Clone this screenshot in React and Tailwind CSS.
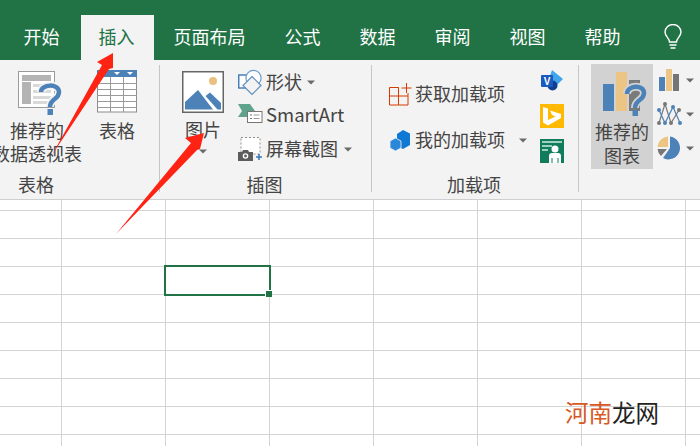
const tabs = ["开始", "插入", "页面布局", "公式", "数据", "审阅", "视图", "帮助"];
const rows = Array.from({ length: 10 });
const cols = Array.from({ length: 7 });

function Caret({ className = "" }) {
  return (
    <svg width="8" height="5" viewBox="0 0 8 5" className={"shrink-0 " + className}>
      <polygon points="0,0.5 8,0.5 4,4.5" fill="#6a6a6a" />
    </svg>
  );
}

function PivotIcon() {
  return (
    <svg width="46" height="47" viewBox="0 0 46 47">
      <rect x="0.5" y="1.5" width="36" height="36" fill="#fff" stroke="#9a9a9a" />
      <rect x="4" y="5" width="29" height="6" fill="#b4b4b4" />
      <rect x="4" y="12" width="9" height="22" fill="#b4b4b4" />
      <rect x="15" y="14" width="18" height="3" fill="#d9d9d9" />
      <rect x="15" y="20" width="18" height="3" fill="#d9d9d9" />
      <rect x="15" y="26" width="18" height="3" fill="#d9d9d9" />
      <rect x="15" y="31" width="18" height="3" fill="#d9d9d9" />
      <path d="M23 22 C23 14 41 13 41 22 C41 30 32 28 32 37" fill="none" stroke="#f3f3f3" strokeWidth="8" />
      <path d="M23 22 C23 14 41 13 41 22 C41 30 32 28 32 37" fill="none" stroke="#4d82b8" strokeWidth="4.5" />
      <rect x="29.5" y="39" width="5.5" height="6" fill="#4d82b8" />
    </svg>
  );
}

function TableIcon() {
  return (
    <svg width="40" height="43" viewBox="0 0 40 43">
      <rect x="0.5" y="1" width="39" height="41" fill="#fff" stroke="#8c8c8c" />
      <rect x="0" y="0" width="40" height="7" fill="#4d82b8" />
      <polygon points="17,2 23,2 20,5" fill="#fff" />
      <polygon points="30,2 36,2 33,5" fill="#fff" />
      {[13, 19, 25, 31, 37].map((y) => (
        <line key={y} x1="0" x2="40" y1={y + 0.5} y2={y + 0.5} stroke="#9a9a9a" />
      ))}
      <line x1="13.5" x2="13.5" y1="7" y2="42" stroke="#9a9a9a" />
      <line x1="26.5" x2="26.5" y1="7" y2="42" stroke="#9a9a9a" />
    </svg>
  );
}

function PictureIcon() {
  return (
    <svg width="42" height="42" viewBox="0 0 42 42">
      <rect x="0.75" y="0.75" width="40.5" height="40.5" fill="#fff" stroke="#666" strokeWidth="1.5" />
      <circle cx="31" cy="10" r="4" fill="#e9c07f" />
      <path d="M3 31 L16 19 L31 38.5 L3 38.5 Z" fill="#4d82b8" />
      <path d="M23.5 25 L28 21.5 L39 32 L39 38.5 L35.5 38.5 Z" fill="#4d82b8" />
    </svg>
  );
}

function ShapeIcon() {
  return (
    <svg width="26" height="28" viewBox="0 0 26 28">
      <rect x="0.75" y="7" width="13.5" height="13" fill="#fff" stroke="#3f78b4" strokeWidth="1.4" />
      <circle cx="15.5" cy="10" r="7.6" fill="#fff" stroke="#6c9bcb" strokeWidth="1.2" />
      <polygon points="14,8.5 23,17.5 14,26.5 5,17.5" fill="#f3f3f3" stroke="#5f8fbf" strokeWidth="1.2" />
    </svg>
  );
}

function SmartArtIcon() {
  return (
    <svg width="25" height="20" viewBox="0 0 25 20">
      <polygon points="0,0 12,0 17,7 12,13 0,13 4,7" fill="#5fa38d" />
      <rect x="9.5" y="7.5" width="14.5" height="11" fill="#fff" stroke="#777" />
      <rect x="12" y="10.5" width="2" height="1" fill="#777" />
      <rect x="12" y="14" width="2" height="1" fill="#777" />
      <rect x="15.5" y="10.5" width="6" height="1" fill="#999" />
      <rect x="15.5" y="14" width="6" height="1" fill="#999" />
    </svg>
  );
}

function ScreenshotIcon() {
  return (
    <svg width="25" height="24" viewBox="0 0 25 24">
      <rect x="3" y="0.5" width="19" height="16.5" fill="#fff" stroke="#8f8f8f" strokeDasharray="2 2" />
      <path d="M0 15 H4 L5 13 H10 L11 15 H15 V24 H0 Z" fill="#5c5c5c" />
      <circle cx="7.5" cy="19" r="2.8" fill="#fff" />
      <circle cx="7.5" cy="19" r="1.4" fill="#5c5c5c" />
      <path d="M18 20 H24 M21 17 V23" stroke="#3f78b4" strokeWidth="1.6" />
    </svg>
  );
}

function GetAddinIcon() {
  return (
    <svg width="23" height="23" viewBox="0 0 23 23" fill="none" stroke="#d83b01" strokeWidth="1">
      <path d="M0.5 4.5 H9.5 V22 H0.5 Z M0.5 13 H19 V22 H9.5 M9.5 13 V4.5 M19 13 V10" />
      <path d="M17.5 0 V10 M12.5 5 H22.5" />
    </svg>
  );
}

function MyAddinIcon() {
  return (
    <svg width="21" height="21" viewBox="0 0 21 21">
      <polygon points="13,0 20,3.5 20,15 13,19 7,16 7,4" fill="#0f78d4" />
      <polygon points="5.5,8 11,11 11,18 5.5,21 0,18 0,11" fill="#2b88d8" stroke="#f3f3f3" strokeWidth="0.8" />
    </svg>
  );
}

function VisioIcon() {
  return (
    <svg width="22" height="21" viewBox="0 0 22 21">
      <polygon points="11,0 22,9 15,16 7,12" fill="#41a5ee" />
      <circle cx="11.5" cy="15.5" r="5" fill="#103f91" />
      <rect x="0" y="5" width="12" height="12" rx="1" fill="#185abd" />
      <text x="6" y="15" textAnchor="middle" fontSize="10" fontWeight="700" fill="#fff" fontFamily="Liberation Sans">V</text>
    </svg>
  );
}

function BingIcon() {
  return (
    <svg width="24" height="24" viewBox="0 0 24 24">
      <rect width="24" height="24" fill="#ffb900" />
      <path d="M3 3 L8 4.5 V16 L15.5 12.5 L12 11 L10 6.5 L21 10 V14 L8 21.5 L3 18.5 Z" fill="#fff" />
    </svg>
  );
}

function PeopleIcon() {
  return (
    <svg width="24" height="24" viewBox="0 0 24 24">
      <rect width="24" height="24" fill="#107c5b" />
      <rect x="2" y="2" width="20" height="2" fill="#9fcfbd" />
      <rect x="2" y="6" width="10" height="2" fill="#9fcfbd" />
      <rect x="2" y="10" width="6" height="2" fill="#9fcfbd" />
      <circle cx="15" cy="10" r="3.5" fill="#fff" />
      <path d="M9 24 V17 Q9 14 12 14 H18 Q21 14 21 17 V24 H18.5 V19 H17.5 V24 H12.5 V19 H11.5 V24 Z" fill="#fff" />
    </svg>
  );
}

function ChartIcon() {
  return (
    <svg width="44" height="46" viewBox="0 0 44 46">
      <rect x="0" y="13" width="11" height="27" fill="#4d82b8" />
      <rect x="13" y="1" width="11" height="39" fill="#ecc584" />
      <rect x="26" y="9" width="11" height="31" fill="#7a7a7a" />
      <path d="M24 23 C24 14 41 13 41 22 C41 30 32 28 32 37" fill="none" stroke="#d2d2d2" strokeWidth="8" />
      <path d="M24 23 C24 14 41 13 41 22 C41 30 32 28 32 37" fill="none" stroke="#4d82b8" strokeWidth="4.5" />
      <rect x="29.5" y="39" width="5.5" height="6" fill="#4d82b8" />
    </svg>
  );
}

function BarIcon() {
  return (
    <svg width="22" height="22" viewBox="0 0 22 22">
      <rect x="1" y="8" width="6" height="14" fill="#4d82b8" />
      <rect x="8" y="0" width="6" height="22" fill="#ecc584" />
      <rect x="15" y="5" width="6" height="17" fill="#757575" />
    </svg>
  );
}

function LineIcon() {
  return (
    <svg width="25" height="24" viewBox="0 0 25 24" fill="none">
      <path d="M2 21 L8 2 L14 21 L22 8" stroke="#777" strokeWidth="1.2" />
      <path d="M2 8 L8 21 L16 5 L23 21" stroke="#4d82b8" strokeWidth="1.2" />
      {[[2, 21], [8, 2], [14, 21], [22, 8]].map(([x, y]) => (
        <circle key={x} cx={x} cy={y} r="2" fill="#777" />
      ))}
      {[[2, 8], [8, 21], [16, 5], [23, 21]].map(([x, y]) => (
        <circle key={x} cx={x} cy={y} r="2" fill="#4d82b8" />
      ))}
    </svg>
  );
}

function PieIcon() {
  return (
    <svg width="24" height="24" viewBox="0 0 24 24">
      <path d="M13 0.5 A11.5 11.5 0 1 1 6 22 L13 12 Z" fill="#4d82b8" />
      <path d="M11 0.5 V11 H0.5 A11 11 0 0 1 11 0.5 Z" fill="#ecc584" />
      <path d="M0.5 13 H10 L4 20 A11 11 0 0 1 0.5 13 Z" fill="#777" />
    </svg>
  );
}

function BulbIcon() {
  return (
    <svg width="18" height="26" viewBox="0 0 18 26" fill="none" stroke="#fff" strokeWidth="1.4">
      <path d="M5.5 18 C5.5 14 1 12.5 1 8 A8 7.5 0 0 1 17 8 C17 12.5 12.5 14 12.5 18 Z" />
      <path d="M5.5 21 H12.5 M6.5 24 H11.5" strokeWidth="1.6" />
    </svg>
  );
}

function Separator() {
  return <div className="w-px h-[127px] mt-[5px] bg-[#c6c6c6] shrink-0" />;
}

function GroupLabel({ children, className = "" }) {
  return <div className={"h-[24px] leading-[24px] mb-[3px] " + className}>{children}</div>;
}

export default function App() {
  return (
    <div className="relative w-[700px] h-[446px] overflow-hidden bg-white text-[18px] text-[#444] font-['Noto_Sans_CJK_SC','Noto_Sans',sans-serif]">
      <header className="h-[60px] bg-[#217346] flex items-end pl-[4px] text-white">
        {tabs.map((t) => (
          <div
            key={t}
            className={
              "h-[45px] leading-[42px] whitespace-nowrap " +
              (t === "插入"
                ? "ml-[2px] pl-[17.5px] pr-[19.5px] bg-[#f3f3f3] text-[#217346]"
                : "mx-px px-[18.5px]")
            }
          >
            {t}
          </div>
        ))}
        <div className="ml-[24px] mb-[10px]">
          <BulbIcon />
        </div>
      </header>

      <section className="h-[140px] bg-[#f3f3f3] border-b border-[#cfcfcf] flex leading-[23px]">
        <div className="w-[159px] shrink-0 flex flex-col">
          <div className="flex-1 flex pt-[10px]">
            <div className="w-[74px] flex flex-col items-center">
              <div className="h-[49px] w-[46px] ml-[7px]">
                <PivotIcon />
              </div>
              <div className="whitespace-nowrap text-center">
                推荐的
                <br />
                数据透视表
              </div>
            </div>
            <div className="w-[40px] ml-[23px] flex flex-col items-center">
              <div className="h-[49px]">
                <TableIcon />
              </div>
              <div className="whitespace-nowrap">表格</div>
            </div>
          </div>
          <GroupLabel className="pl-[18px]">表格</GroupLabel>
        </div>
        <Separator />

        <div className="w-[211px] shrink-0 flex flex-col">
          <div className="flex-1 flex pt-[8px]">
            <div className="w-[42px] ml-[22px] pt-[3px] flex flex-col items-center">
              <PictureIcon />
              <div className="whitespace-nowrap mt-[5px]">图片</div>
              <Caret className="mt-[8px]" />
            </div>
            <div className="ml-[14px] flex flex-col">
              <div className="flex items-center h-[28px]">
                <ShapeIcon />
                <span className="ml-[2px] mb-[2px] whitespace-nowrap">形状</span>
                <Caret className="ml-[5px]" />
              </div>
              <div className="flex items-center h-[24px] mt-[6px]">
                <SmartArtIcon />
                <span className="ml-[3px] text-[18.5px] whitespace-nowrap">SmartArt</span>
              </div>
              <div className="flex items-center h-[24px] mt-[11px]">
                <ScreenshotIcon />
                <span className="ml-[3px] mb-[2px] whitespace-nowrap">屏幕截图</span>
                <Caret className="ml-[6px]" />
              </div>
            </div>
          </div>
          <GroupLabel className="text-center pr-[2px]">插图</GroupLabel>
        </div>
        <Separator />

        <div className="w-[206px] shrink-0 flex flex-col">
          <div className="flex-1 flex pt-[10px]">
            <div className="ml-[17px] w-[150px] flex flex-col pt-[12px]">
              <div className="flex items-center h-[24px]">
                <GetAddinIcon />
                <span className="ml-[3px] mb-[2px] whitespace-nowrap">获取加载项</span>
              </div>
              <div className="flex items-center h-[24px] mt-[22px]">
                <div className="ml-px">
                  <MyAddinIcon />
                </div>
                <span className="ml-[4px] mb-[2px] whitespace-nowrap">我的加载项</span>
                <Caret className="ml-[14px]" />
              </div>
            </div>
            <div className="flex flex-col items-center ml-px">
              <VisioIcon />
              <div className="mt-[13px]">
                <BingIcon />
              </div>
              <div className="mt-[11px]">
                <PeopleIcon />
              </div>
            </div>
          </div>
          <GroupLabel className="text-center pr-[2px]">加载项</GroupLabel>
        </div>
        <Separator />

        <div className="flex-1 flex">
          <div className="ml-[12px] mt-[4px] w-[62px] h-[105px] bg-[#d2d2d2] flex flex-col items-center pt-[7px] leading-[24px]">
            <div className="h-[48px] w-[44px] ml-[12px] self-start">
              <ChartIcon />
            </div>
            <div className="text-center whitespace-nowrap">
              推荐的
              <br />
              图表
            </div>
          </div>
          <div className="ml-[4px] pt-[9px] flex flex-col">
            <div className="flex items-center h-[22px]">
              <div className="w-[29px] pl-[1px]">
                <BarIcon />
              </div>
              <Caret />
            </div>
            <div className="flex items-center h-[24px] mt-[11px]">
              <div className="w-[29px]">
                <LineIcon />
              </div>
              <Caret />
            </div>
            <div className="flex items-center h-[24px] mt-[10px]">
              <div className="w-[29px]">
                <PieIcon />
              </div>
              <Caret />
            </div>
          </div>
        </div>
      </section>

      <main className="h-[246px] overflow-hidden">
        <div className="grid grid-cols-[62px_repeat(6,104px)_15px] grid-rows-[11px_repeat(9,28px)]">
          {rows.map((_, r) =>
            [...cols, null].map((_, c) => (
              <div
                key={r + "-" + c}
                className={
                  "border-b border-[#d4d4d4] " + (c < 7 ? "border-r" : "")
                }
              />
            ))
          )}
        </div>
      </main>

      <div className="absolute left-[164px] top-[265px] w-[107px] h-[31px] border-2 border-[#217346]">
        <div className="absolute right-[-3px] bottom-[-3px] w-[6px] h-[6px] bg-[#217346] border-t border-l border-white box-content" />
      </div>

      <svg className="absolute inset-0 pointer-events-none" width="700" height="446" viewBox="0 0 700 446">
        <polygon points="113,53 97,62 102,65 52,155 109,69 113,68" fill="#ff2314" />
        <polygon points="204,133 185,138 191,143 116,234 197,150 200,149" fill="#ff2314" />
      </svg>

      <div className="absolute left-[565px] top-[394px] text-[23.5px] leading-[36px] whitespace-nowrap text-[#222]">
        <span className="text-[#d9581f]">河南</span>龙网
      </div>
    </div>
  );
}
